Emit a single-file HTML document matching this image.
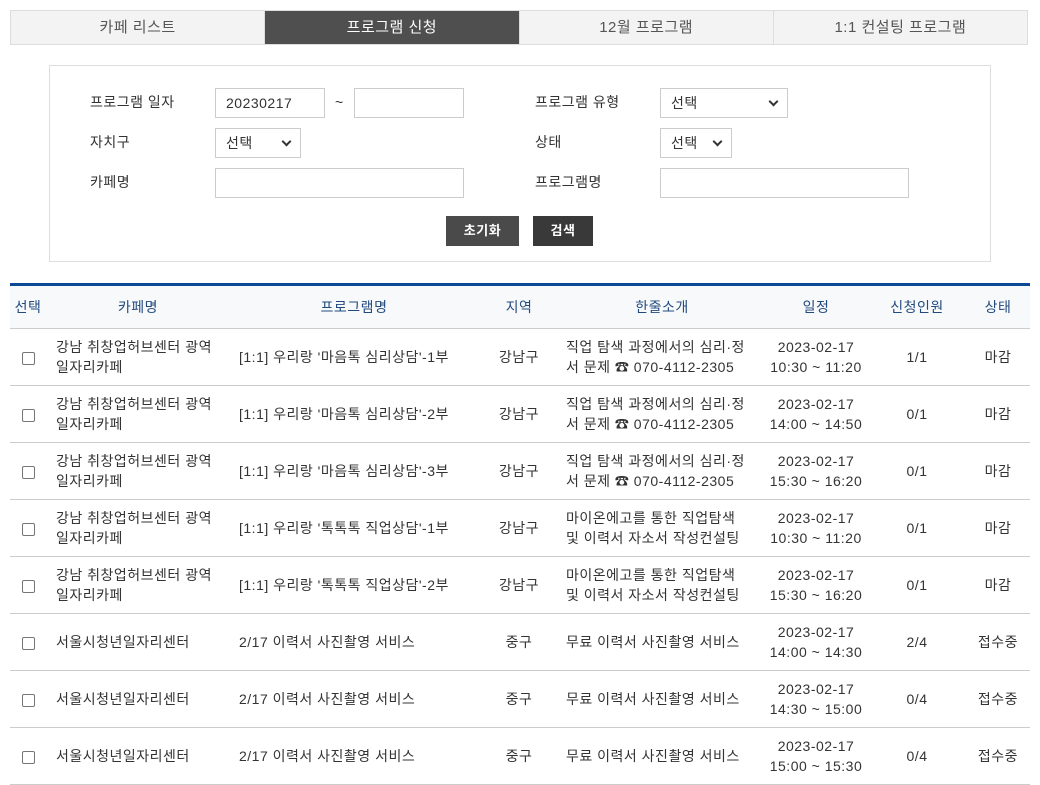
<!DOCTYPE html>
<html><head><meta charset="utf-8"><style>
*{box-sizing:border-box;margin:0;padding:0}
body{width:1040px;height:778px;overflow:hidden;background:#fff;font-family:"Liberation Sans","Noto Sans CJK KR",sans-serif;color:#333;font-size:14px;letter-spacing:0.5px}
.tabs{position:absolute;left:10px;top:10px;width:1018px;height:35px;display:flex;border:1px solid #ddd}
.tabs div{flex:1;text-align:center;line-height:33px;font-size:15px;color:#555;background:#f3f3f3;border-left:1px solid #ddd}
.tabs div:first-child{border-left:none}
.tabs div.on{background:#4f4f4f;color:#fff}
.box{position:absolute;left:49px;top:65px;width:942px;height:197px;border:1px solid #ddd}
.lbl{position:absolute;font-size:14px;color:#333}
.inp{position:absolute;height:30px;border:1px solid #ccc;background:#fff;font-size:14px;padding-left:10px;line-height:28px}
.sel:after{content:"";position:absolute;right:10px;top:9px;width:5px;height:5px;border-right:2px solid #333;border-bottom:2px solid #333;transform:rotate(45deg)}
.btn{position:absolute;top:216px;height:30px;background:#4a4a4a;color:#fff;font-weight:bold;font-size:13px;text-align:center;line-height:30px}
table{position:absolute;left:10px;top:283px;width:1020px;border-collapse:collapse;border-top:3px solid #0b4a94}
th{height:44px;background:#f7f9fb;color:#234a7e;font-weight:normal;font-size:14px;border-bottom:1px solid #ccc}
td{height:57px;border-bottom:1px solid #ccc;text-align:center;line-height:20px;font-size:14px;color:#333}
td.l{text-align:left;padding-left:10px}
td.p{text-align:left;padding-left:9px}
.cb{display:inline-block;width:13px;height:13px;border:1px solid #767676;border-radius:2px;vertical-align:middle}
</style></head><body>
<div class="tabs"><div>카페 리스트</div><div class="on">프로그램 신청</div><div>12월 프로그램</div><div>1:1 컨설팅 프로그램</div></div>
<div class="box"></div>
<div class="lbl" style="left:90px;top:92px">프로그램 일자</div>
<div class="inp" style="left:215px;top:88px;width:110px">20230217</div>
<div class="lbl" style="left:335px;top:94px">~</div>
<div class="inp" style="left:354px;top:88px;width:110px"></div>
<div class="lbl" style="left:90px;top:132px">자치구</div>
<div class="inp sel" style="left:215px;top:128px;width:86px">선택</div>
<div class="lbl" style="left:90px;top:172px">카페명</div>
<div class="inp" style="left:215px;top:168px;width:249px"></div>
<div class="lbl" style="left:535px;top:92px">프로그램 유형</div>
<div class="inp sel" style="left:660px;top:88px;width:128px">선택</div>
<div class="lbl" style="left:535px;top:132px">상태</div>
<div class="inp sel" style="left:660px;top:128px;width:72px">선택</div>
<div class="lbl" style="left:535px;top:172px">프로그램명</div>
<div class="inp" style="left:660px;top:168px;width:249px"></div>
<div class="btn" style="left:446px;width:73px">초기화</div>
<div class="btn" style="left:533px;width:60px;background:#393939">검색</div>
<table>
<colgroup><col style="width:36px"><col style="width:184px"><col style="width:248px"><col style="width:82px"><col style="width:204px"><col style="width:104px"><col style="width:98px"><col style="width:64px"></colgroup>
<tr><th>선택</th><th>카페명</th><th>프로그램명</th><th>지역</th><th>한줄소개</th><th>일정</th><th>신청인원</th><th>상태</th></tr>
<tr><td><span class="cb"></span></td><td class="l">강남 취창업허브센터 광역<br>일자리카페</td><td class="p">[1:1] 우리랑 '마음톡 심리상담'-1부</td><td>강남구</td><td class="l" style="padding-left:6px">직업 탐색 과정에서의 심리·정<br>서 문제 ☎ 070-4112-2305</td><td>2023-02-17<br>10:30 ~ 11:20</td><td>1/1</td><td>마감</td></tr>
<tr><td><span class="cb"></span></td><td class="l">강남 취창업허브센터 광역<br>일자리카페</td><td class="p">[1:1] 우리랑 '마음톡 심리상담'-2부</td><td>강남구</td><td class="l" style="padding-left:6px">직업 탐색 과정에서의 심리·정<br>서 문제 ☎ 070-4112-2305</td><td>2023-02-17<br>14:00 ~ 14:50</td><td>0/1</td><td>마감</td></tr>
<tr><td><span class="cb"></span></td><td class="l">강남 취창업허브센터 광역<br>일자리카페</td><td class="p">[1:1] 우리랑 '마음톡 심리상담'-3부</td><td>강남구</td><td class="l" style="padding-left:6px">직업 탐색 과정에서의 심리·정<br>서 문제 ☎ 070-4112-2305</td><td>2023-02-17<br>15:30 ~ 16:20</td><td>0/1</td><td>마감</td></tr>
<tr><td><span class="cb"></span></td><td class="l">강남 취창업허브센터 광역<br>일자리카페</td><td class="p">[1:1] 우리랑 '톡톡톡 직업상담'-1부</td><td>강남구</td><td class="l" style="padding-left:6px">마이온에고를 통한 직업탐색<br>및 이력서 자소서 작성컨설팅</td><td>2023-02-17<br>10:30 ~ 11:20</td><td>0/1</td><td>마감</td></tr>
<tr><td><span class="cb"></span></td><td class="l">강남 취창업허브센터 광역<br>일자리카페</td><td class="p">[1:1] 우리랑 '톡톡톡 직업상담'-2부</td><td>강남구</td><td class="l" style="padding-left:6px">마이온에고를 통한 직업탐색<br>및 이력서 자소서 작성컨설팅</td><td>2023-02-17<br>15:30 ~ 16:20</td><td>0/1</td><td>마감</td></tr>
<tr><td><span class="cb"></span></td><td class="l">서울시청년일자리센터</td><td class="p">2/17 이력서 사진촬영 서비스</td><td>중구</td><td class="l" style="padding-left:6px">무료 이력서 사진촬영 서비스</td><td>2023-02-17<br>14:00 ~ 14:30</td><td>2/4</td><td>접수중</td></tr>
<tr><td><span class="cb"></span></td><td class="l">서울시청년일자리센터</td><td class="p">2/17 이력서 사진촬영 서비스</td><td>중구</td><td class="l" style="padding-left:6px">무료 이력서 사진촬영 서비스</td><td>2023-02-17<br>14:30 ~ 15:00</td><td>0/4</td><td>접수중</td></tr>
<tr><td><span class="cb"></span></td><td class="l">서울시청년일자리센터</td><td class="p">2/17 이력서 사진촬영 서비스</td><td>중구</td><td class="l" style="padding-left:6px">무료 이력서 사진촬영 서비스</td><td>2023-02-17<br>15:00 ~ 15:30</td><td>0/4</td><td>접수중</td></tr>
</table>
</body></html>
